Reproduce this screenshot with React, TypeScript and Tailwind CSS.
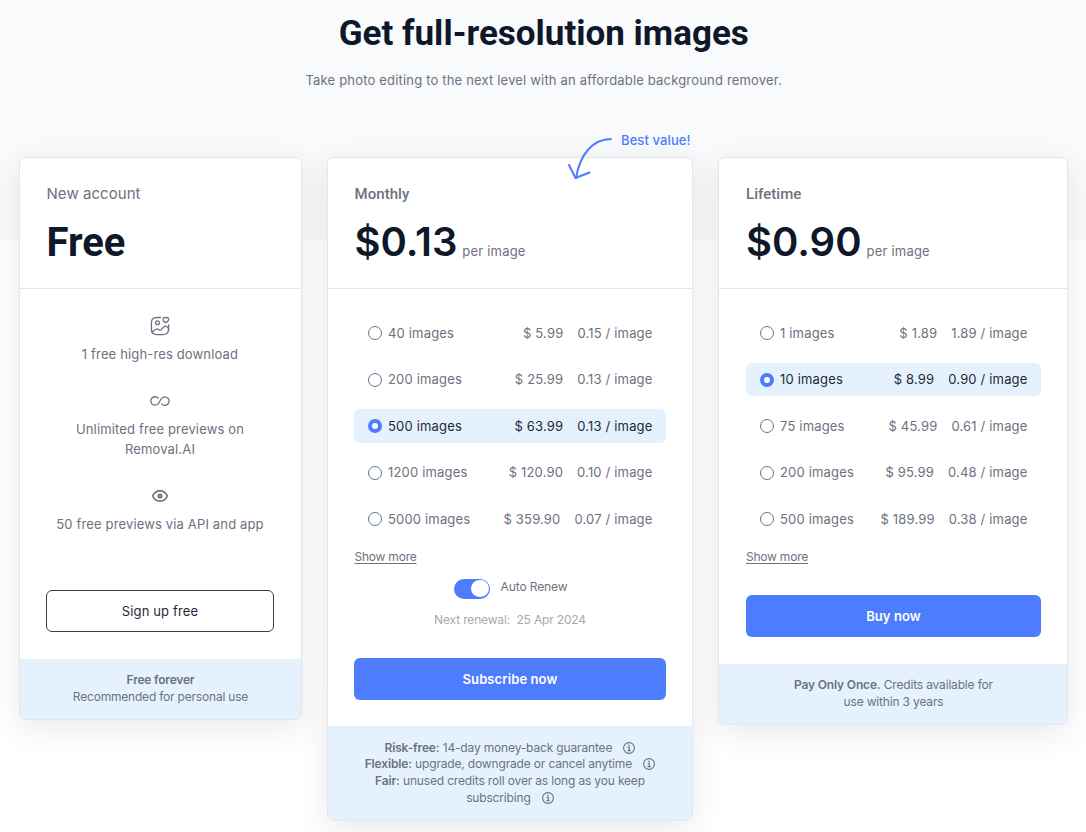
import { useState } from 'react';
import type { ReactNode } from 'react';

interface Pack {
  count: string;
  price: string;
  rate: string;
}

const monthlyPacks: Pack[] = [
  { count: '40', price: '5.99', rate: '0.15' },
  { count: '200', price: '25.99', rate: '0.13' },
  { count: '500', price: '63.99', rate: '0.13' },
  { count: '1200', price: '120.90', rate: '0.10' },
  { count: '5000', price: '359.90', rate: '0.07' },
];

const lifetimePacks: Pack[] = [
  { count: '1', price: '1.89', rate: '1.89' },
  { count: '10', price: '8.99', rate: '0.90' },
  { count: '75', price: '45.99', rate: '0.61' },
  { count: '200', price: '95.99', rate: '0.48' },
  { count: '500', price: '189.99', rate: '0.38' },
];

const PictureIcon = () => (
  <svg className="h-5 w-5" viewBox="0 0 20 20" fill="none" stroke="currentColor" strokeWidth="1.3" strokeLinecap="round" strokeLinejoin="round">
    <path d="M10.5 1.5H7C3.1 1.5 1.4 3.2 1.4 7v6c0 3.8 1.7 5.6 5.6 5.6h6c3.9 0 5.6-1.8 5.6-5.6V9" />
    <circle cx="7.5" cy="6.7" r="1.9" />
    <path d="M13.2 2.2c.9-.8 1.8-.9 2.6-.4.8-.5 1.7-.4 2.6.4.7 2-.4 3.8-2.6 4.3-2.2-.5-3.3-2.3-2.6-4.3z" />
    <path d="M2 16 6.2 13.3c.7-.5 1.6-.4 2.2.1l.3.3c.6.5 1.6.5 2.2 0l3.5-3.1c.6-.5 1.6-.5 2.2 0l2 1.8" />
  </svg>
);

const InfinityIcon = () => (
  <svg className="h-5 w-5" viewBox="0 0 20 20" fill="none" stroke="currentColor" strokeWidth="1.3" strokeLinecap="round">
    <path d="M8.2 7.2A4.2 4.2 0 1 0 8 12.9C9.3 11.7 10.2 8.5 11.9 7.2A4.2 4.2 0 1 1 11.7 12.9" />
  </svg>
);

const EyeIcon = () => (
  <svg className="h-5 w-5" viewBox="0 0 20 20" fill="none" stroke="currentColor" strokeWidth="1.7">
    <path d="M2.7 10C4.2 6.5 7 4.9 10 4.9s5.8 1.6 7.3 5.1c-1.5 3.5-4.3 5.1-7.3 5.1S4.2 13.5 2.7 10z" />
    <circle cx="10" cy="10" r="1.8" fill="currentColor" fillOpacity="0.7" strokeWidth="1.4" />
  </svg>
);

const InfoIcon = () => (
  <svg className="ml-2 inline-block h-3 w-3 align-[-2px]" viewBox="0 0 12 12" fill="none" stroke="currentColor">
    <circle cx="6" cy="6" r="5.4" strokeWidth="1.1" />
    <path d="M4.7 5.3H6.3V8.7M4.5 8.7H7.7" strokeWidth="1.2" />
    <circle cx="6" cy="3.3" r=".8" fill="currentColor" stroke="none" />
  </svg>
);

const Card = ({ className, children }: { className: string; children: ReactNode }) => (
  <section className={`flex flex-col overflow-hidden rounded-md border border-[#e3e6ec] bg-white shadow-[0_8px_34px_rgba(0,0,0,0.09)] ${className}`}>
    {children}
  </section>
);

const CardHeader = ({ title, price, unit, className = 'pl-[26.5px]' }: { title: string; price: string; unit?: boolean; className?: string }) => (
  <header className={`h-[131px] border-b border-[#e3e6ec] pt-6 ${className}`}>
    <h2 className={unit ? 'font-[Roboto] text-[15px] leading-6 font-medium tracking-[0.05px]' : 'text-[15px] leading-6 tracking-[0.05px]'}>{title}</h2>
    <p className="mt-3 flex items-baseline leading-[48px]">
      <span className={unit ? 'text-[40px] font-semibold text-[#0f172a]' : 'pt-px font-[Roboto] text-[40px] font-bold text-[#0f172a]'}>{price}</span>
      {unit && <span className="ml-[5px] tracking-[0.2px]">per image</span>}
    </p>
  </header>
);

const PackList = ({ name, packs, initial }: { name: string; packs: Pack[]; initial: number }) => {
  const [selected, setSelected] = useState(initial);

  return (
    <div className="flex flex-col gap-[13.2px]">
      {packs.map((pack, i) => (
        <label
          key={pack.count}
          className={`flex h-[33.4px] cursor-pointer items-center rounded-md px-[13.5px] tracking-[0.17px] ${selected === i ? 'bg-[#e5f2fe] text-[#1f2937]' : ''}`}
        >
          <input type="radio" name={name} className="sr-only" checked={selected === i} onChange={() => setSelected(i)} />
          <span
            className={`mr-[6.5px] h-3.5 w-3.5 shrink-0 rounded-full ${selected === i ? 'border-[4.5px] border-[#4d7cfe] bg-white' : 'border border-[#64748b]'}`}
          />
          <span className="pt-px">{pack.count} images</span>
          <span className="ml-auto pt-px">$ {pack.price}</span>
          <span className="ml-[14px] pt-px">{pack.rate} / image</span>
        </label>
      ))}
    </div>
  );
};

const primaryButton = 'h-[42px] w-full rounded-md bg-[#4d7cfe] pt-0.5 font-semibold tracking-[0.1px] text-white';

const App = () => {
  return (
    <main className="h-[832px] overflow-hidden bg-white bg-[linear-gradient(#f9fafc_240px,#ffffff_240px)] font-[Inter,sans-serif] text-[13px] text-[#6b7280]">
      <div className="h-[157px] pt-[10px] pl-[1.5px] text-center">
        <h1 className="font-[Roboto] text-[35px] leading-[48px] font-bold text-[#0f172a]">Get full-resolution images</h1>
        <p className="mt-3 leading-5 tracking-[0.18px]">Take photo editing to the next level with an affordable background remover.</p>
      </div>

      <div className="flex items-start gap-[25px] pl-[19px]">
        <Card className="h-[563px] w-[283px]">
          <CardHeader title="New account" price="Free" />
          <div className="flex flex-col items-center pt-[27px] pr-[27px] pl-[26px] text-center leading-5 tracking-[0.15px]">
            <PictureIcon />
            <p className="mt-2 mb-[27px]">1 free high-res download</p>
            <InfinityIcon />
            <p className="mt-2 mb-[27px]">Unlimited free previews on<br />Removal.AI</p>
            <EyeIcon />
            <p className="mt-2">50 free previews via API and app</p>
            <button className="mt-[56px] h-[42px] w-full rounded-md border border-[#334155] text-[#1f2937]">Sign up free</button>
          </div>
          <footer className="mt-[27px] flex-1 bg-[#e5f2fe] pt-[13px] text-center text-xs leading-[16.8px] tracking-[-0.2px]">
            <p className="font-semibold">Free forever</p>
            <p>Recommended for personal use</p>
          </footer>
        </Card>

        <div className="relative">
          <Card className="h-[664px] w-[366px]">
            <CardHeader title="Monthly" price="$0.13" unit />
            <div className="px-[26px] pt-[27.3px]">
              <PackList name="monthly" packs={monthlyPacks} initial={2} />
              <a href="#more" className="mt-[10.5px] ml-[0.5px] block text-xs leading-5 tracking-[-0.22px] underline underline-offset-2">Show more</a>
              <div className="mt-3 flex h-5 justify-center gap-[11px] pl-px">
                <span className="flex h-5 w-9 items-center justify-end rounded-full bg-[#4d7cfe] p-px">
                  <span className="h-[17.5px] w-[17.5px] rounded-full bg-white" />
                </span>
                <span className="text-xs leading-4 tracking-[-0.1px]">Auto Renew</span>
              </div>
              <p className="mt-[11px] text-center text-xs leading-5 tracking-[-0.16px] whitespace-pre text-[#a6a9af]">Next renewal:  25 Apr 2024</p>
              <button className={`mt-7 ${primaryButton}`}>Subscribe now</button>
            </div>
            <footer className="mt-[26px] flex-1 bg-[#e5f2fe] pt-[14px] text-center text-xs leading-[16.7px] tracking-[-0.16px]">
              <p><b className="font-semibold">Risk-free:</b> 14-day money-back guarantee <InfoIcon /></p>
              <p><b className="font-semibold">Flexible:</b> upgrade, downgrade or cancel anytime <InfoIcon /></p>
              <p><b className="font-semibold">Fair:</b> unused credits roll over as long as you keep<br />subscribing <InfoIcon /></p>
            </footer>
          </Card>

          {/* Callout that hangs over the top edge of the card */}
          <div className="absolute -top-[27px] left-[240px] flex text-[#4d7cfe]">
            <svg className="h-[52px] w-[48px]" viewBox="0 0 48 52" fill="none" stroke="currentColor" strokeWidth="2" strokeLinecap="round" strokeLinejoin="round">
              <path d="M44 9C26 9 13 24 9 48" />
              <path d="M2 35 8.5 48 22.5 42.5" />
            </svg>
            <span className="ml-1.5 leading-5 font-medium tracking-[0.1px] whitespace-nowrap">Best value!</span>
          </div>
        </div>

        <Card className="h-[568px] w-[350px]">
          <CardHeader title="Lifetime" price="$0.90" unit className="pl-[27px]" />
          <div className="pt-[27.3px] pr-[26px] pl-[27px]">
            <PackList name="lifetime" packs={lifetimePacks} initial={1} />
            <a href="#more" className="mt-[10.5px] block text-xs leading-5 tracking-[-0.22px] underline underline-offset-2">Show more</a>
            <button className={`mt-7 ${primaryButton}`}>Buy now</button>
          </div>
          <footer className="mt-[27px] flex-1 bg-[#e5f2fe] pt-[12.5px] pl-px text-center text-xs leading-[17px] tracking-[-0.17px]">
            <p><b className="font-semibold">Pay Only Once.</b> Credits available for<br />use within 3 years</p>
          </footer>
        </Card>
      </div>
    </main>
  );
};

export default App;
